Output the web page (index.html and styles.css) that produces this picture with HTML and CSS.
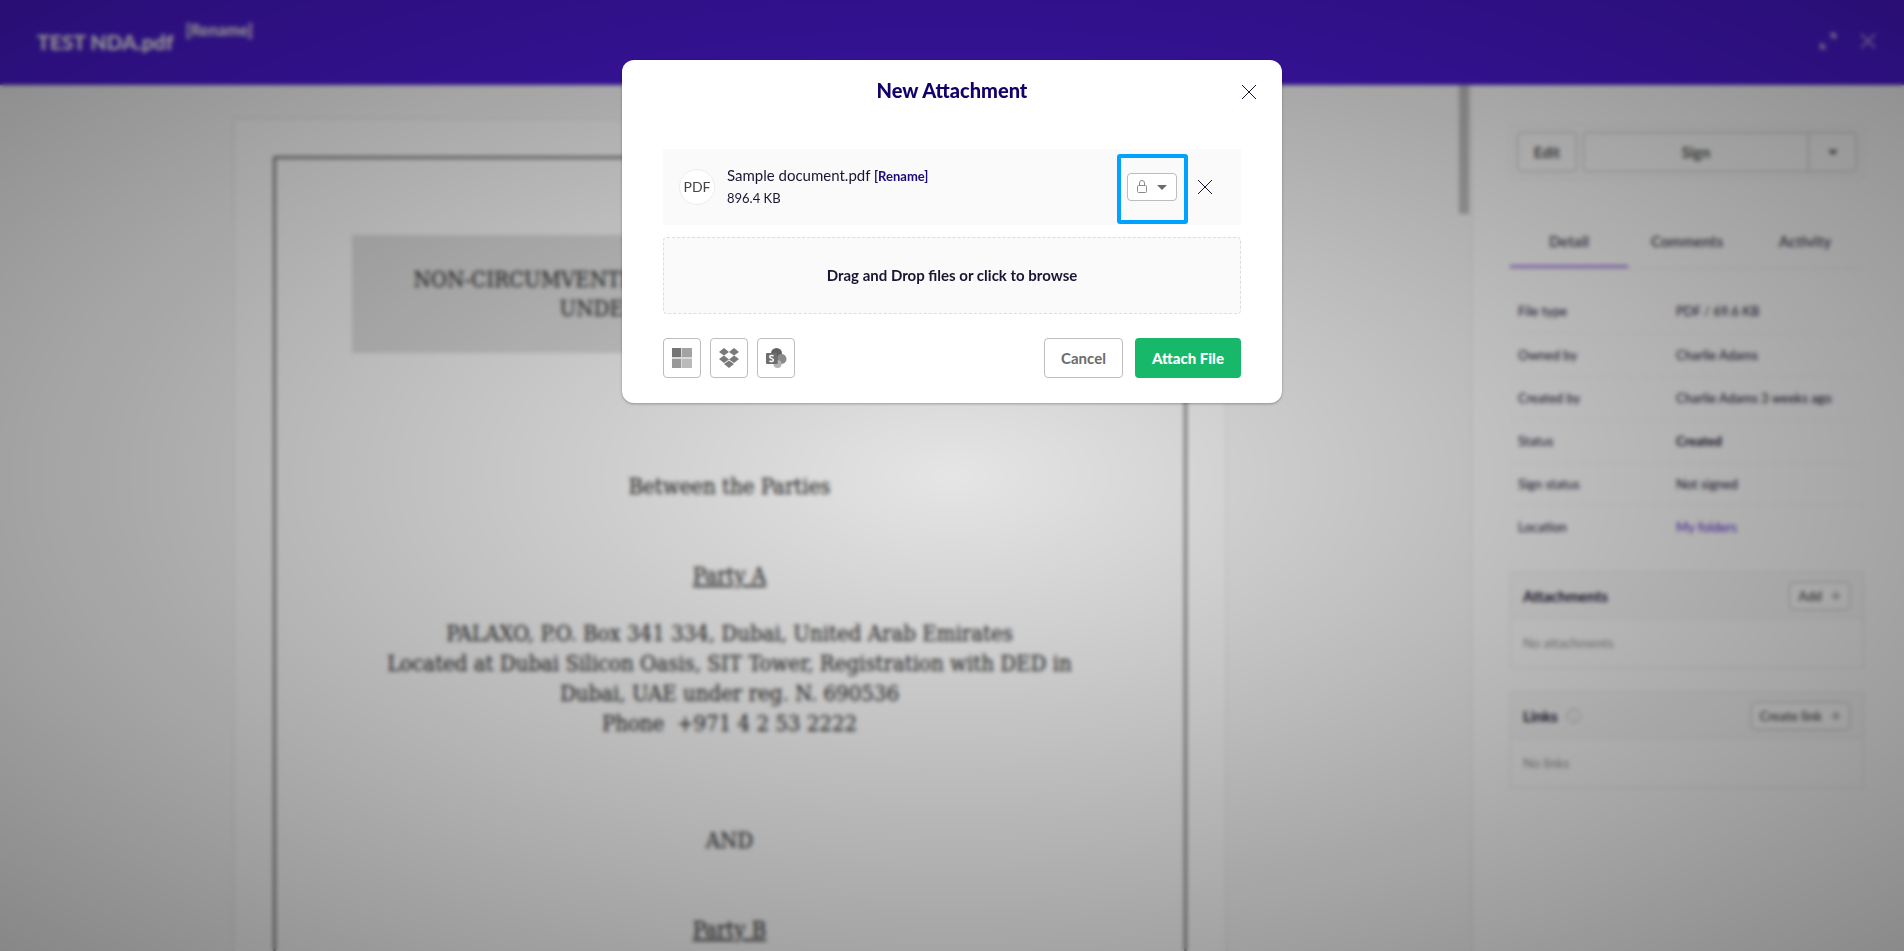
FILE: index.html
```
<!DOCTYPE html>
<html lang="en">
    <head>
        <title>TEST NDA.pdf</title>
        <meta charset="UTF-8">
        <meta name="viewport" content="width=device-width, initial-scale=1.0">
        <link rel="stylesheet" href="styles.css">
    </head>
    <body>
        <div class="app">
            <header class="topbar">
                <h1>TEST NDA.pdf</h1>
                <a href="#" class="rename-top">[Rename]</a>
                <div class="topbar-icons">
                    <button type="button" aria-label="Full screen">
                        <svg width="16" height="16" viewBox="0 0 16 16" fill="none" stroke="currentColor"><path d="M1 15L6 10M10 6L15 1"/><path d="M9 0h7v7zM0 9v7h7z" fill="currentColor" stroke="none"/></svg>
                    </button>
                    <button type="button" aria-label="Close">
                        <svg width="16" height="16" viewBox="0 0 16 16" fill="none" stroke="currentColor" stroke-width="1.500"><path d="M1 1L15 15M15 1L1 15"/></svg>
                    </button>
                </div>
            </header>
            <div class="main">
                <div class="viewer">
                    <article class="page">
                        <div class="page-frame">
                            <div class="doc-title">
                                <div class="line1">NON-CIRCUMVENTI</div>
                                <div class="line2">UNDE</div>
                            </div>
                            <p class="between">Between the Parties</p>
                            <p class="party">Party A</p>
                            <p class="address">PALAXO, P.O. Box 341 334, Dubai, United Arab Emirates<br>Located at Dubai Silicon Oasis, SIT Tower, Registration with DED in<br>Dubai, UAE under reg. N. 690536<br>Phone&nbsp; +971 4 2 53 2222</p>
                            <p class="and">AND</p>
                            <p class="party">Party B</p>
                        </div>
                    </article>
                    <div class="scroll-track"><div class="scroll-thumb"></div></div>
                </div>
                <aside class="sidebar">
                    <div class="actions">
                        <button type="button" class="edit">Edit</button>
                        <div class="split">
                            <button type="button" class="sign">Sign</button>
                            <button type="button" class="sign-more" aria-label="More"><span class="caret"></span></button>
                        </div>
                    </div>
                    <nav class="tabs">
                        <a href="#" class="active">Detail</a>
                        <a href="#">Comments</a>
                        <a href="#">Activity</a>
                    </nav>
                    <table class="details">
                        <tr><th>File type</th><td>PDF / 69.6 KB</td></tr>
                        <tr><th>Owned by</th><td>Charlie Adams</td></tr>
                        <tr><th>Created by</th><td>Charlie Adams 3 weeks ago</td></tr>
                        <tr><th>Status</th><td><b>Created</b></td></tr>
                        <tr><th>Sign status</th><td>Not signed</td></tr>
                        <tr><th>Location</th><td><a href="#">My folders</a></td></tr>
                    </table>
                    <section class="card">
                        <div class="card-head">
                            <h2>Attachments</h2>
                            <button type="button">Add <svg width="10" height="10" viewBox="0 0 10 10" stroke="currentColor"><path d="M5 0V10M0 5H10"/></svg></button>
                        </div>
                        <p>No attachments</p>
                    </section>
                    <section class="card">
                        <div class="card-head">
                            <h2>Links</h2>
                            <svg class="info" width="16" height="16" viewBox="0 0 16 16" fill="none" stroke="currentColor"><circle cx="8" cy="8" r="7"/><path d="M8 7v5M8 4v1"/></svg>
                            <button type="button">Create link <svg width="10" height="10" viewBox="0 0 10 10" stroke="currentColor"><path d="M5 0V10M0 5H10"/></svg></button>
                        </div>
                        <p>No links</p>
                    </section>
                </aside>
            </div>
        </div>

        <div class="overlay">
            <div class="modal" role="dialog" aria-labelledby="modalTitle">
                <div class="modal-head">
                    <h2 id="modalTitle">New Attachment</h2>
                    <button type="button" class="close" aria-label="Close">
                        <svg width="14" height="14" viewBox="0 0 14 14" stroke="currentColor"><path d="M0 0L14 14M14 0L0 14"/></svg>
                    </button>
                </div>
                <div class="file-row">
                    <div class="file-icon">PDF</div>
                    <div class="file-info">
                        <div class="file-name">Sample document.pdf <a href="#">[Rename]</a></div>
                        <div class="file-size">896.4 KB</div>
                    </div>
                    <div class="lock-wrap">
                        <button type="button" class="lock" aria-label="Permissions">
                            <svg width="10" height="14" viewBox="0 0 10 14" fill="none" stroke="#8a8a8a"><rect x="0.5" y="5.5" width="9" height="7" rx="1"/><path d="M2.5 5.500V3a2.500 2.500 0 0 1 5 0V5.500"/></svg>
                            <span class="caret"></span>
                        </button>
                    </div>
                    <button type="button" class="close" aria-label="Remove file">
                        <svg width="14" height="14" viewBox="0 0 14 14" stroke="currentColor"><path d="M0 0L14 14M14 0L0 14"/></svg>
                    </button>
                </div>
                <label class="dropzone">
                    Drag and Drop files or click to browse
                    <input type="file" hidden>
                </label>
                <div class="modal-foot">
                    <button type="button" class="source" aria-label="OneDrive">
                        <svg width="20" height="20" viewBox="0 0 20 20"><path fill="#d9d9d9" d="M0 0h20v20H0z"/><path fill="#757575" d="M0 0h9v9H0z"/><path fill="#a3a3a3" d="M10 0h10v9H10z"/><path fill="#999" d="M0 11h9v9H0z"/><path fill="#bababa" d="M10 11h10v9H10z"/></svg>
                    </button>
                    <button type="button" class="source" aria-label="Dropbox">
                        <svg width="22" height="20" viewBox="0 0 22 20" fill="#7a7a7a"><path d="M6 0l5 4-5 3.500L1 4zM16 0l5 4-5 3.500L11 4zM6 7.500l5 4L6 15 1 11zM16 7.500l5 3.500-5 4-5-3.500zM11 12.500l5 3.500-5 4-5-4z"/></svg>
                    </button>
                    <button type="button" class="source" aria-label="SharePoint">
                        <svg width="21" height="20" viewBox="0 0 21 20"><circle cx="10.500" cy="5.500" r="5.500" fill="#606060"/><circle cx="15.500" cy="11" r="5" fill="#8a8a8a"/><circle cx="11.500" cy="16" r="4" fill="#b3b3b3"/><path fill="#555" d="M8 5h4v11H8z" opacity=".5"/><rect y="5" width="11" height="11" rx="1" fill="#6e6e6e"/><path d="M7.500 8C6 7.200 3.600 7.400 3.700 9c.1 1.600 3.700 1.200 3.700 3 0 1.700-2.600 1.800-4 .9" fill="none" stroke="#fff" stroke-width="1.500"/></svg>
                    </button>
                    <button type="button" class="cancel">Cancel</button>
                    <button type="button" class="attach">Attach File</button>
                </div>
            </div>
        </div>
    </body>
</html>
```
FILE: styles.css
```
* {
    box-sizing: border-box;
}
body {
    margin: 0;
    font-family: Lato, sans-serif;
    font-size: 13px;
    color: #1b1534;
    overflow: hidden;
}
h1, h2, p {
    margin: 0;
}
a {
    color: #5a1fd0;
    text-decoration: none;
}
button {
    font-family: inherit;
    background: #fff;
    border: 1px solid #bdbdbd;
    border-radius: 4px;
    color: #6b6b6b;
    padding: 0;
    cursor: pointer;
}
svg {
    display: block;
}
.caret {
    border: 5px solid transparent;
    border-top-color: currentColor;
    border-bottom: 0;
}

/* page behind the dialog */
.app {
    display: flex;
    flex-direction: column;
    height: 100vh;
}
.topbar {
    display: flex;
    align-items: center;
    height: 85px;
    flex-shrink: 0;
    padding: 0 28px 3px 37px;
    background: #4d1bd8;
    color: #fff;
}
.topbar h1 {
    font-size: 21px;
    font-weight: 900;
}
.rename-top {
    color: #eee;
    font-size: 16px;
    font-weight: 900;
    margin: 0 auto 24px 12px;
}
.topbar-icons {
    display: flex;
    gap: 24px;
}
.topbar-icons button {
    background: none;
    border: 0;
    color: #d0c4f0;
}
.main {
    display: flex;
    flex: 1;
    min-height: 0;
}
.viewer {
    display: flex;
    flex: 1;
    background: #fafafa;
    overflow: hidden;
}
.page {
    width: 994px;
    height: 1400px;
    margin: 33px auto 0;
    padding: 37px 39px;
    background: #fff;
    border: 1px solid #e4e4e4;
}
.page-frame {
    height: 100%;
    padding: 76px;
    border: 3px solid #888;
    font-family: "DejaVu Serif Condensed", "Liberation Serif", serif;
    font-size: 22px;
    line-height: 29px;
    text-align: center;
    color: #222;
}
.doc-title {
    height: 118px;
    padding-top: 30px;
    background: #e2e2e2;
    text-align: left;
}
.doc-title .line1 {
    padding-left: 62px;
}
.doc-title .line2 {
    padding-left: 208px;
}
.between {
    margin-top: 119px;
}
.party {
    margin-top: 60px;
    text-decoration: underline;
}
.address {
    margin: 29px -40px 0;
    line-height: 30px;
}
.and {
    margin-top: 87px;
}
.scroll-track {
    width: 12px;
}
.scroll-thumb {
    width: 10px;
    height: 129px;
    background: #c1c1c1;
}
.sidebar {
    width: 433px;
    padding: 40px 40px 40px 38px;
    background: #fff;
    border-left: 1px solid #e4e4e4;
}
.actions {
    display: flex;
    gap: 6px;
    padding: 6px;
    border: 1px solid #eee;
}
.actions button {
    height: 40px;
    font-size: 15px;
    font-weight: bold;
    color: #555;
}
.actions .edit {
    width: 60px;
}
.split {
    display: flex;
    flex: 1;
}
.split .sign {
    flex: 1;
    border-radius: 4px 0 0 4px;
}
.split .sign-more {
    display: flex;
    align-items: center;
    justify-content: center;
    width: 49px;
    margin-left: -1px;
    border-radius: 0 4px 4px 0;
}
.tabs {
    display: flex;
    margin-top: 38px;
    border-bottom: 1px solid #eee;
}
.tabs a {
    flex: 1;
    padding: 14px 0;
    line-height: 20px;
    font-size: 15px;
    font-weight: bold;
    text-align: center;
    color: #5d5a6b;
    border-bottom: 3px solid transparent;
}
.tabs .active {
    border-color: #b48ae8;
}
.details {
    width: 100%;
    margin-top: 21px;
    border-collapse: collapse;
}
.details tr {
    height: 43px;
    border-bottom: 1px solid #f6f6f6;
}
.details tr:last-child {
    border-bottom: 0;
}
.details th, .details td {
    padding: 0 8px;
    text-align: left;
    font-weight: normal;
}
.details th {
    width: 158px;
}
.card {
    margin-top: 24px;
    border: 1px solid #e8e8e8;
}
.card-head {
    display: flex;
    align-items: center;
    height: 46px;
    padding: 0 13px 0 12px;
    background: #fafafa;
    border-bottom: 1px solid #eee;
}
.card h2 {
    font-size: 15px;
}
.card button {
    display: flex;
    align-items: center;
    gap: 9px;
    height: 28px;
    margin-left: auto;
    padding: 0 8px;
    font-size: 13px;
    font-weight: bold;
}
.card .info {
    margin-left: 8px;
    color: #bbb;
}
.card p {
    padding: 0 12px;
    line-height: 48px;
    color: #999;
}

/* dialog */
.overlay {
    position: fixed;
    inset: 0;
    padding-top: 60px;
    background: radial-gradient(rgba(0, 0, 0, .1), rgba(0, 0, 0, .46));
    backdrop-filter: blur(2px);
}
.modal {
    width: 660px;
    max-width: 100%;
    margin: 0 auto;
    padding: 0 41px 25px;
    background: #fff;
    border-radius: 12px;
    box-shadow: 0 1px 3px rgba(0, 0, 0, .3);
}
.modal-head {
    display: grid;
    grid-template-columns: 14px 1fr 14px;
    align-items: center;
    height: 64px;
    margin: 0 -15px 25px;
}
.modal-head h2 {
    grid-column: 2;
    padding-bottom: 4px;
    font-size: 20px;
    line-height: 24px;
    font-weight: 900;
    text-align: center;
    color: #14006b;
}
.close {
    background: none;
    border: 0;
    color: #1b1534;
}
.file-row {
    display: flex;
    align-items: center;
    height: 76px;
    padding: 0 29px 0 16px;
    background: #fafafa;
}
.file-icon {
    width: 36px;
    height: 36px;
    border: 1px solid #ececec;
    border-radius: 50%;
    background: #fff;
    font-size: 14px;
    line-height: 34px;
    text-align: center;
    color: #444;
}
.file-info {
    flex: 1;
    margin-left: 12px;
    padding-bottom: 2px;
    line-height: 22px;
}
.file-name {
    font-size: 15px;
}
.file-name a {
    font-size: 13px;
    font-weight: bold;
    color: #1d0a7a;
}
.lock-wrap {
    position: relative;
    margin-right: 21px;
}
/* blue marker around the permission menu */
.lock-wrap::after {
    content: "";
    position: absolute;
    inset: -19px -11px -23px -10px;
    border: 4px solid #00a2ff;
    border-radius: 3px;
    pointer-events: none;
}
.lock {
    display: flex;
    align-items: center;
    justify-content: center;
    gap: 10px;
    width: 50px;
    height: 28px;
}
.dropzone {
    display: flex;
    align-items: center;
    justify-content: center;
    height: 77px;
    margin-top: 12px;
    padding-bottom: 2px;
    background: #fafafa;
    border: 1px dashed #ddd;
    border-radius: 4px;
    font-size: 15px;
    font-weight: bold;
    cursor: pointer;
}
.modal-foot {
    display: flex;
    gap: 9px;
    margin-top: 24px;
}
.modal-foot button {
    height: 40px;
}
.source {
    display: flex;
    align-items: center;
    justify-content: center;
    width: 38px;
}
.modal-foot .cancel {
    width: 79px;
    margin-left: auto;
    font-size: 15px;
    font-weight: bold;
}
.modal-foot .attach {
    width: 106px;
    margin-left: 3px;
    font-size: 15px;
    font-weight: 900;
    color: #fff;
    background: #17b869;
    border: 0;
}
```
